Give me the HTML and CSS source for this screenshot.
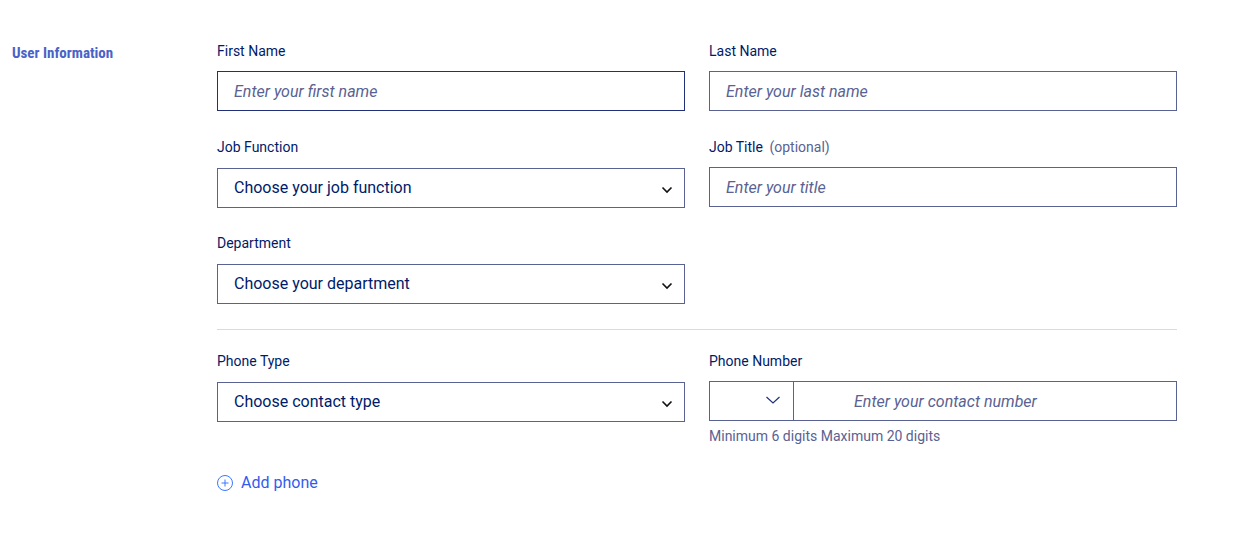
FILE: index.html
```html
<!DOCTYPE html>
<html lang="en">
<head>
  <meta charset="UTF-8" />
  <meta name="viewport" content="width=device-width, initial-scale=1.0"/>
  <title>User Information</title>
  <link rel="stylesheet" href="styles.css">
</head>
<body>
  <form class="user-form">
    <h2>User Information</h2>
    <div class="fields">
      <div class="grid">
        <div class="field">
          <label for="firstName">First Name</label>
          <input type="text" id="firstName" class="active" placeholder="Enter your first name">
        </div>
        <div class="field">
          <label for="lastName">Last Name</label>
          <input type="text" id="lastName" placeholder="Enter your last name">
        </div>
        <div class="field">
          <label for="jobFunction">Job Function</label>
          <div class="select-wrap">
            <select id="jobFunction">
              <option>Choose your job function</option>
            </select>
            <svg class="arrow" width="12" height="8" viewBox="0 0 12 8"><path d="M1.5 1.5L6 6L10.5 1.5"/></svg>
          </div>
        </div>
        <div class="field">
          <label for="jobTitle">Job Title <span class="optional">(optional)</span></label>
          <input type="text" id="jobTitle" placeholder="Enter your title">
        </div>
        <div class="field">
          <label for="department">Department</label>
          <div class="select-wrap">
            <select id="department">
              <option>Choose your department</option>
            </select>
            <svg class="arrow" width="12" height="8" viewBox="0 0 12 8"><path d="M1.5 1.5L6 6L10.5 1.5"/></svg>
          </div>
        </div>
      </div>
      <hr>
      <div class="grid">
        <div class="field">
          <label for="phoneType">Phone Type</label>
          <div class="select-wrap">
            <select id="phoneType">
              <option>Choose contact type</option>
            </select>
            <svg class="arrow" width="12" height="8" viewBox="0 0 12 8"><path d="M1.5 1.5L6 6L10.5 1.5"/></svg>
          </div>
        </div>
        <div class="field">
          <label for="phoneNumber">Phone Number</label>
          <div class="phone">
            <div class="country">
              <select aria-label="Country code">
                <option></option>
              </select>
              <svg class="arrow thin" width="16" height="10" viewBox="0 0 16 10"><path d="M1.5 2L8 8L14.5 2"/></svg>
            </div>
            <input type="tel" id="phoneNumber" placeholder="Enter your contact number">
          </div>
          <p class="hint">Minimum 6 digits Maximum 20 digits</p>
        </div>
      </div>
      <button type="button" class="add">
        <svg width="16" height="16" viewBox="0 0 16 16"><circle cx="8" cy="8" r="7.5"/><path d="M8 4.5v7M4.500 8h7"/></svg>
        Add phone
      </button>
    </div>
  </form>
</body>
</html>
```

FILE: styles.css
```css
* {
  box-sizing: border-box;
}
body {
  margin: 0;
  font-family: Roboto, Arial, sans-serif;
  font-size: 16px;
  color: #001b69;
  background: #fff;
}
.user-form {
  display: flex;
  padding: 41px 56px 40px 12px;
}
h2 {
  flex: 0 0 205px;
  margin: 0;
  font-family: "Liberation Sans Narrow", "Roboto Condensed", "DejaVu Sans Condensed", sans-serif;
  font-size: 15px;
  line-height: 24px;
  font-weight: bold;
  color: #4a62c8;
}
.fields {
  flex: 1;
  min-width: 0;
}
.grid {
  display: grid;
  grid-template-columns: 1fr 1fr;
  gap: 24px;
}
.field {
  min-height: 72px;
}
label {
  display: block;
  margin-bottom: 10px;
  font-size: 14px;
  line-height: 20px;
}
.optional {
  margin-left: 3px;
  color: #596293;
}
input,
select {
  display: block;
  width: 100%;
  height: 40px;
  padding: 0 16px;
  border: 1px solid #596293;
  border-radius: 0;
  background: #fff;
  font: inherit;
  color: inherit;
}
input.active {
  border-color: #22307a;
}
input::placeholder {
  font-style: italic;
  color: #596293;
  opacity: 1;
}
select {
  appearance: none;
  padding-bottom: 2px;
}
.select-wrap,
.country {
  position: relative;
}
.select-wrap {
  margin-top: 11px;
}
.arrow {
  position: absolute;
  right: 12px;
  top: 18px;
  fill: none;
  stroke: #111;
  stroke-width: 1.6;
  pointer-events: none;
}
.arrow.thin {
  top: 14px;
  stroke: #22307a;
  stroke-width: 1.2;
}
.phone {
  display: flex;
}
.country {
  flex: 0 0 84px;
}
.country select {
  border-right: none;
}
.phone input {
  padding-left: 60px;
}
hr {
  margin: 24px 0 21px;
  border: none;
  border-top: 1px solid #dadae6;
}
.hint {
  margin: 5px 0 0;
  font-size: 14px;
  line-height: 20px;
  color: #596293;
}
.add {
  display: flex;
  align-items: center;
  gap: 8px;
  margin-top: 26px;
  padding: 0;
  border: none;
  background: none;
  font: inherit;
  line-height: 21px;
  color: #335bee;
  cursor: pointer;
}
.add svg {
  fill: none;
  stroke: #3a78ff;
}
```
